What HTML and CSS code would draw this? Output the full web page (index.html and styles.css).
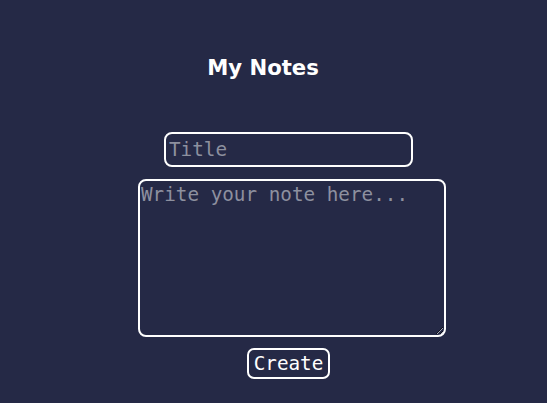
FILE: index.html
```html
<!DOCTYPE html>
<html>
<head>
<meta charset="utf-8">
<link rel="stylesheet" href="styles.css">
</head>
<body>
<main class="app">
  <h1 class="app-title">My Notes</h1>
  <form class="note-form">
    <input class="note-title" type="text" placeholder="Title">
    <textarea class="note-body" placeholder="Write your note here..."></textarea>
    <button class="note-create" type="button">Create</button>
  </form>
</main>
</body>
</html>
```
FILE: styles.css
```css
html, body {
  margin: 0;
  padding: 0;
  background: #252946;
  height: 100%;
}
.app {
  display: flex;
  flex-direction: column;
  align-items: center;
  padding-left: 37px;
  padding-top: 52px;
}
.app-title {
  margin: 0 58px 0 0;
  font-family: "DejaVu Sans", sans-serif;
  font-weight: bold;
  font-size: 21.2px;
  color: #ffffff;
  line-height: 32px;
}
.note-form {
  display: flex;
  flex-direction: column;
  align-items: center;
  margin-top: 48px;
}
.note-title,
.note-body,
.note-create {
  font-family: "DejaVu Sans Mono", monospace;
  font-size: 19.3px;
  background: transparent;
  border: 2px solid #ffffff;
  color: #ffffff;
  box-sizing: border-box;
  outline: none;
}
.note-title {
  width: 249px;
  height: 35px;
  border-radius: 8px;
  padding: 0 3px;
  margin-right: 7px;
}
.note-body {
  margin-top: 12px;
  width: 308px;
  height: 158px;
  border-radius: 8px;
  padding: 2px 1px;
  resize: both;
}
.note-title::placeholder,
.note-body::placeholder {
  color: #8d909f;
}
.note-create {
  margin-top: 11px;
  margin-right: 7px;
  height: 31px;
  padding: 0 5px;
  border-radius: 7px;
  cursor: pointer;
}
```
